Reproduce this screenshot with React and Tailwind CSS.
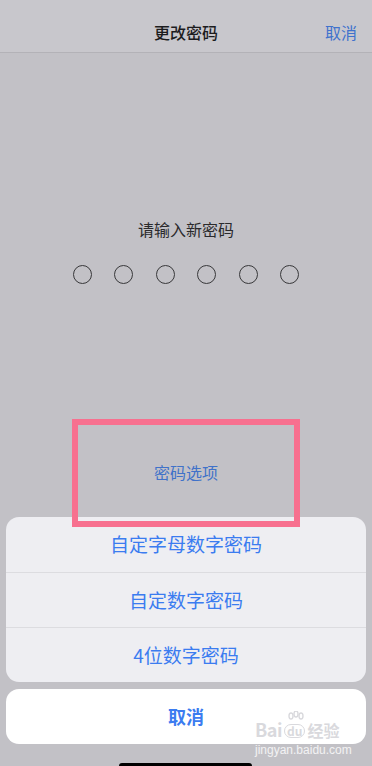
export default function App() {
    const dots = [0, 1, 2, 3, 4, 5];
    const options = ['自定字母数字密码', '自定数字密码', '4位数字密码'];

    return (
        <div
            className="relative h-[766px] w-[372px] overflow-hidden bg-[#c2c1c6]"
            style={{ fontFamily: "'Noto Sans CJK SC', 'Noto Sans', sans-serif" }}
        >
            {/* Header */}
            <div className="grid h-[53px] grid-cols-[1fr_auto_1fr] items-center border-b border-[#b3b2b7] bg-[#c8c7cc] pt-[12px]">
                <div />
                <div className="text-[16px] font-medium text-[#1c1c1e]">更改密码</div>
                <div className="pr-[15px] text-right text-[16px] text-[#3f72cc]">取消</div>
            </div>

            {/* Passcode entry */}
            <div className="mt-[165px] text-center text-[16px] leading-[22px] text-[#2a2a2c]">请输入新密码</div>
            <div className="mt-[25px] flex justify-center gap-[22.5px]">
                {dots.map((d) => (
                    <div key={d} className="h-[19px] w-[19px] rounded-full border-[1.6px] border-[#38383a]" />
                ))}
            </div>
            <div className="mt-[177px] text-center text-[16px] leading-[22px] text-[#4072c9]">密码选项</div>

            {/* Action sheet */}
            <div className="absolute inset-x-[6px] bottom-[22px] flex flex-col gap-[7px]">
                <div className="overflow-hidden rounded-[13px] bg-[#eeeef2]">
                    {options.map((o, i) => (
                        <div
                            key={o}
                            className={`flex h-[55px] items-center justify-center text-[19px] text-[#3b7cf0] ${i > 0 ? 'border-t border-[#dcdce0]' : ''}`}
                        >
                            {o}
                        </div>
                    ))}
                </div>
                <div className="flex h-[55px] items-center justify-center rounded-[13px] bg-white text-[18px] font-bold text-[#3b7cf0]">
                    取消
                </div>
            </div>

            {/* Home indicator */}
            <div className="absolute bottom-0 left-[119px] h-[3px] w-[133px] rounded-t-full bg-black" />

            {/* Annotation box */}
            <div className="absolute left-[72px] top-[419px] h-[108px] w-[228px] border-[6px] border-[#f7708f]" />

            {/* Watermark */}
            <div className="pointer-events-none absolute left-[255px] top-[720px] flex flex-col items-start">
                <div className="relative flex items-end gap-[2px] leading-none text-[#d9d9dd]">
                    <span className="text-[18px] font-bold tracking-tight">Bai</span>
                    <span className="relative rounded-full border-[1.5px] border-[#d9d9dd] px-[2px] text-[12px] font-bold">
                        du
                        <svg className="absolute -top-[14px] left-[1px]" width="20" height="14" viewBox="0 0 20 14" fill="none" stroke="#d9d9dd" strokeWidth="1.4">
                            <ellipse cx="5" cy="5" rx="2" ry="3" />
                            <ellipse cx="10" cy="3" rx="2" ry="3" />
                            <ellipse cx="15" cy="5" rx="2" ry="3" />
                        </svg>
                    </span>
                    <span className="text-[16px] font-bold">经验</span>
                </div>
                <div className="mt-[6px] text-[12px] leading-none text-white/80" style={{ fontFamily: "'Liberation Sans', sans-serif" }}>
                    jingyan.baidu.com
                </div>
            </div>
        </div>
    );
}
